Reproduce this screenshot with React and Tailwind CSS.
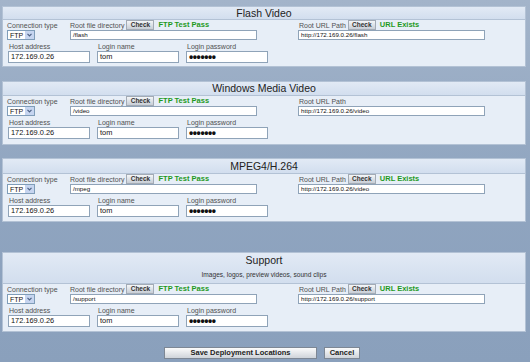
import React from "react";

const SECTIONS = [
  { title: "Flash Video", dir: "/flash", url: "http://172.169.0.26/flash", dirOk: true, urlOk: true, gap: "mt-[6px]", head: "h-[13px]", pb: "pb-[3px]" },
  { title: "Windows Media Video", dir: "/video", url: "http://172.169.0.26/video", dirOk: true, urlOk: false, gap: "mt-[14px]", head: "h-[14px]", pb: "pb-[5px]" },
  { title: "MPEG4/H.264", dir: "/mpeg", url: "http://172.169.0.26/video", dirOk: true, urlOk: true, gap: "mt-[13px]", head: "h-[15px]", pb: "pb-[4px]" },
  {
    title: "Support",
    subtitle: "Images, logos, preview videos, sound clips",
    dir: "/support",
    url: "http://172.169.0.26/support",
    dirOk: true,
    urlOk: true,
    gap: "mt-[30px]",
    head: "h-[31px]",
    pb: "pb-[4px]",
  },
];

function Label({ children }) {
  return <span className="text-[7px] leading-none text-[#505050] whitespace-nowrap">{children}</span>;
}

function CheckBtn() {
  return (
    <span className="inline-flex h-[10px] w-[28px] items-center justify-center border border-[#a3abb5] bg-linear-to-b from-[#f4f6f8] to-[#c8ced6] text-[6.5px] font-bold leading-none text-[#333]">
      Check
    </span>
  );
}

function Status({ children }) {
  return <span className="ml-[2px] text-[7.5px] font-bold leading-none text-[#1e9a1e] whitespace-nowrap">{children}</span>;
}

function Select() {
  return (
    <div className="flex h-[10px] w-[28px] items-center border border-[#7f9db9] bg-white">
      <span className="flex-1 pl-[2px] text-[7px] leading-none text-[#111]">FTP</span>
      <span className="flex h-full w-[9px] items-center justify-center bg-[#c6d5f0]">
        <svg width="5" height="4" viewBox="0 0 5 4">
          <path d="M0.5 0.8 L2.5 2.8 L4.5 0.8" stroke="#4d6185" strokeWidth="1.2" fill="none" />
        </svg>
      </span>
    </div>
  );
}

function Box({ value, className = "", text = "text-[6.2px]" }) {
  return (
    <div className={`flex items-center border border-[#8fa3b8] bg-white pl-[2px] leading-none text-[#111] whitespace-nowrap ${text} ${className}`}>
      {value}
    </div>
  );
}

function Field({ label, value, password }) {
  return (
    <div className="flex w-[82px] flex-col">
      <div className="flex h-[10px] items-center pl-[1px]">
        <Label>{label}</Label>
      </div>
      {password ? (
        <div className="flex h-[12px] items-center border border-[#8fa3b8] bg-white pl-[2px]">
          <span className="text-[12px] font-bold leading-none tracking-[-0.4px] text-[#111]">•••••••</span>
        </div>
      ) : (
        <Box value={value} className="h-[12px]" text="text-[7.4px]" />
      )}
    </div>
  );
}

function Panel({ title, subtitle, dir, url, dirOk, urlOk, gap, head, pb }) {
  return (
    <div className={`ml-[2px] w-[524px] border border-[#b3c2d5] bg-[#e7eef7] ${gap}`}>
      <div
        className={`flex flex-col items-center border-b border-[#b3c2d5] bg-linear-to-b from-[#e2eaf5] to-[#d2deee] ${head} ${
          subtitle ? "pt-[2px]" : "justify-center"
        }`}
      >
        <span className="text-[10.5px] leading-none text-[#222]">{title}</span>
        {subtitle && <span className="mt-[6px] text-[6.6px] leading-none text-[#333]">{subtitle}</span>}
      </div>

      <div className="flex pl-[4px]">
        <div className="flex w-[63px] flex-col">
          <div className="flex h-[10px] items-center">
            <Label>Connection type</Label>
          </div>
          <Select />
        </div>
        <div className="flex w-[228px] flex-col">
          <div className="flex h-[10px] items-center gap-[2px]">
            <Label>Root file directory</Label>
            <CheckBtn />
            {dirOk && <Status>FTP Test Pass</Status>}
          </div>
          <Box value={dir} className="h-[10px] w-[187px]" />
        </div>
        <div className="flex flex-col">
          <div className="flex h-[10px] items-center gap-[2px] pl-[1px]">
            <Label>Root URL Path</Label>
            {urlOk && (
              <>
                <CheckBtn />
                <Status>URL Exists</Status>
              </>
            )}
          </div>
          <Box value={url} className="h-[10px] w-[187px]" />
        </div>
      </div>

      <div className={`mt-[1px] flex gap-[7px] pl-[5px] ${pb}`}>
        <Field label="Host address" value="172.169.0.26" />
        <Field label="Login name" value="tom" />
        <Field label="Login password" password />
      </div>
    </div>
  );
}

export default function App() {
  return (
    <div className="h-[362px] w-[530px] overflow-hidden bg-linear-to-b from-[#a3b4ca] via-[#90a5c0] to-[#8aa0bc] font-['Liberation_Sans',Arial,sans-serif]">
      {SECTIONS.map((s) => (
        <Panel key={s.title} {...s} />
      ))}
      <div className="mt-[15px] flex justify-center gap-[7px] pr-[6px]">
        <button className="flex h-[12px] w-[153px] items-center justify-center border border-[#7d8794] bg-linear-to-b from-[#fbfbfb] to-[#cfd4da] text-[7.5px] font-bold leading-none text-[#222]">
          Save Deployment Locations
        </button>
        <button className="flex h-[12px] w-[36px] items-center justify-center border border-[#7d8794] bg-linear-to-b from-[#fbfbfb] to-[#cfd4da] text-[7.5px] font-bold leading-none text-[#222]">
          Cancel
        </button>
      </div>
    </div>
  );
}
